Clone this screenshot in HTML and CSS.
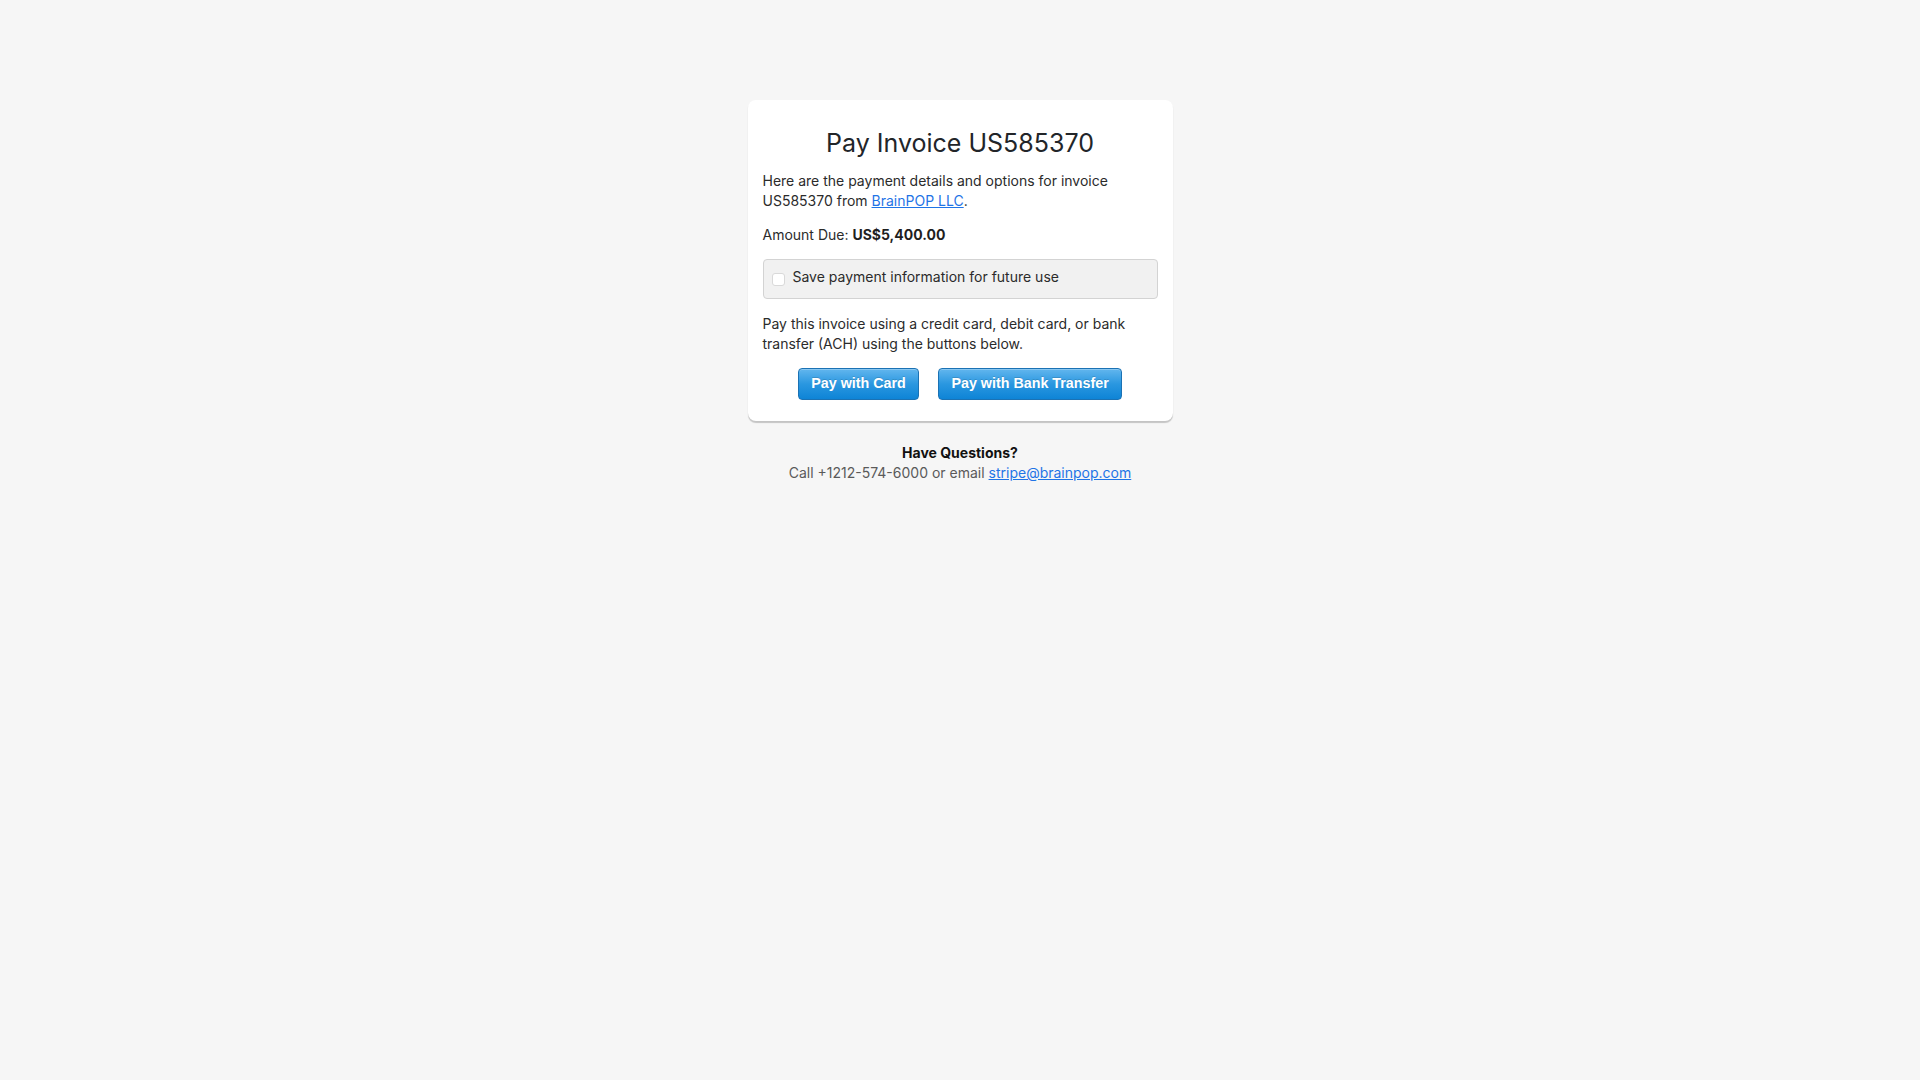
FILE: index.html
```html
<!DOCTYPE html>
<html lang="en">
<head>
<meta charset="utf-8">
<title>Pay Invoice US585370</title>
<link rel="stylesheet" href="styles.css">
</head>
<body>
<main class="page">
  <section class="card">
    <h1 class="title">Pay Invoice US585370</h1>
    <p class="text">Here are the payment details and options for invoice US585370 from <a class="link" href="#">BrainPOP LLC</a>.</p>
    <p class="text amount">Amount Due: <strong>US$5,400.00</strong></p>
    <label class="save-box">
      <input type="checkbox" class="check">
      <span class="save-label">Save payment information for future use</span>
    </label>
    <p class="text instructions">Pay this invoice using a credit card, debit card, or bank transfer (ACH) using the buttons below.</p>
    <div class="actions">
      <button class="btn" type="button">Pay with Card</button>
      <button class="btn" type="button">Pay with Bank Transfer</button>
    </div>
  </section>
  <footer class="help">
    <div class="help-title">Have Questions?</div>
    <div class="help-line">Call +1212-574-6000 or email <a class="link" href="#">stripe@brainpop.com</a></div>
  </footer>
</main>
</body>
</html>
```

FILE: styles.css
```css
html, body {
  margin: 0;
  padding: 0;
}
body {
  background: #f6f6f6;
  font-family: Inter, "Noto Sans", "Liberation Sans", sans-serif;
  font-size: 14px;
  line-height: 20px;
  color: #2b2b2b;
}
.page {
  width: 425px;
  margin: 100px auto 0;
}
.card {
  background: #ffffff;
  border-radius: 8px;
  padding: 15px 15px 16px;
  box-shadow: 0 2px 1px rgba(0, 0, 0, 0.2);
}
.title {
  margin: 13px 0 12px;
  font-size: 25px;
  line-height: 31px;
  font-weight: 400;
  text-align: center;
  color: #222529;
}
.text {
  margin: 0 0 13.5px;
}
.amount {
  margin-bottom: 14.6px;
}
.amount strong {
  font-weight: 700;
  color: #1f1f1f;
}
.link {
  color: #1f74e6;
  text-decoration: underline;
}
.save-box {
  display: flex;
  align-items: flex-start;
  gap: 7.6px;
  padding: 7px 8px 11px;
  background: #f1f1f1;
  border: 1px solid #d3d3d3;
  border-radius: 4px;
  margin-bottom: 15.2px;
}
.check {
  appearance: none;
  -webkit-appearance: none;
  margin: 5.5px 0 0;
  width: 13.4px;
  height: 13.4px;
  flex: none;
  background: #ffffff;
  border: 1px solid #d9d9d9;
  border-radius: 3px;
  box-sizing: border-box;
}
.instructions {
  margin-bottom: 13.3px;
}
.actions {
  display: flex;
  justify-content: center;
  gap: 19.6px;
  margin-bottom: 5.7px;
}
.btn {
  font-family: "Liberation Sans", Arial, sans-serif;
  font-weight: 700;
  font-size: 14.3px;
  line-height: 17px;
  padding: 6px 12px 7px;
  color: #ffffff;
  background: linear-gradient(to bottom, #62b6ee 0%, #2a97e0 50%, #0e84d6 100%);
  border: 1px solid #1b72b4;
  border-radius: 4px;
  text-shadow: 0 -1px 0 rgba(0, 0, 0, 0.15);
  box-shadow: inset 0 1px 0 rgba(255, 255, 255, 0.25);
  cursor: pointer;
}
.help {
  margin-top: 21.6px;
  text-align: center;
}
.help-title {
  font-weight: 700;
  color: #111111;
}
.help-line {
  color: #5a5a5a;
}
```
